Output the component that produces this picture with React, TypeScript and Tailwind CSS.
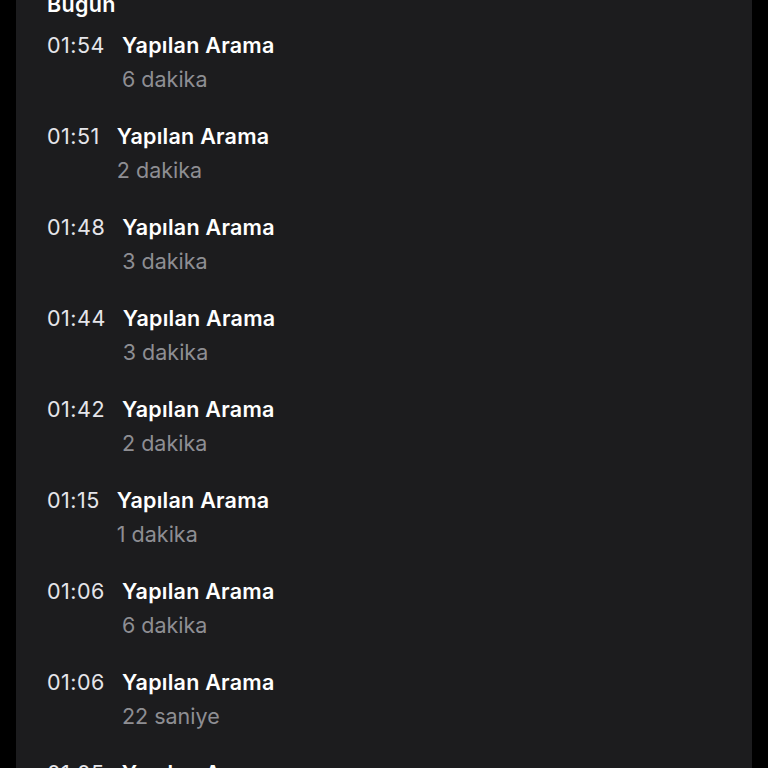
import React from "react";

const rows = [
  ["01:54", "6 dakika"],
  ["01:51", "2 dakika"],
  ["01:48", "3 dakika"],
  ["01:44", "3 dakika"],
  ["01:42", "2 dakika"],
  ["01:15", "1 dakika"],
  ["01:06", "6 dakika"],
  ["01:06", "22 saniye"],
  ["01:05", "1 dakika"],
];

export default function App() {
  return (
    <div
      className="h-[768px] w-[768px] overflow-hidden bg-black pl-[16px]"
      style={{ fontFamily: "Inter, 'Noto Sans', sans-serif" }}
    >
      <div className="flex h-full w-[736px] flex-col overflow-hidden bg-[#1c1c1e] pl-[31px]">
        <div className="-mt-[10px] flex flex-col">
          <div className="h-[28px] text-[21.5px] font-semibold leading-[28px] tracking-[0.3px] text-white">Bugün</div>
          <div className="mt-[13px] flex flex-col">
            {rows.map(([t, d], i) => (
              <div key={i} className="flex h-[91px] shrink-0 flex-row items-start gap-[17px]">
                <div className="text-[21.5px] leading-[28px] tracking-[0.5px] text-[#e5e5ea]">{t}</div>
                <div className="flex flex-col gap-[6px]">
                  <div className="text-[21.5px] font-semibold leading-[28px] tracking-[0.25px] text-white">Yapılan Arama</div>
                  <div className="text-[21.5px] leading-[28px] text-[#8e8e93]">{d}</div>
                </div>
              </div>
            ))}
          </div>
        </div>
      </div>
    </div>
  );
}
